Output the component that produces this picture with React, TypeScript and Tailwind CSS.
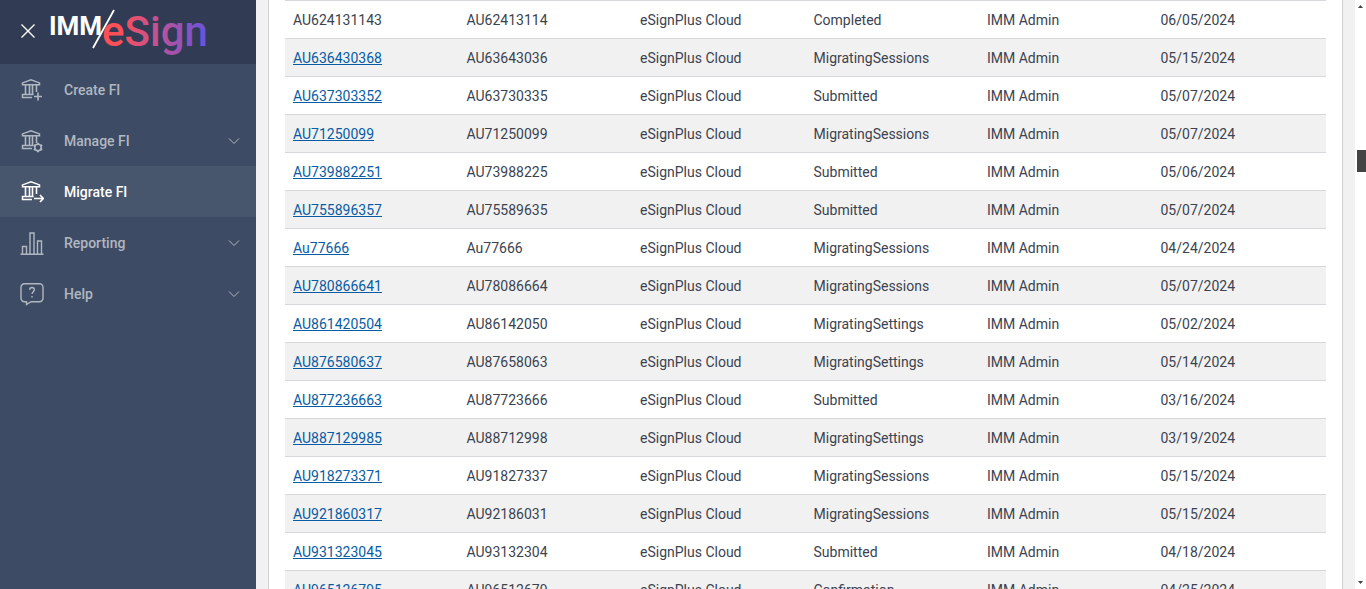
import type { ReactNode } from "react";

interface NavItem {
  label: string;
  icon: ReactNode;
  active?: boolean;
  expandable?: boolean;
}

interface Migration {
  id: string;
  shortId: string;
  status: string;
  date: string;
  locked?: boolean;
}

function Icon({ children }: { children: ReactNode }) {
  return (
    <svg
      viewBox="0 0 24 24"
      className="size-6 shrink-0"
      fill="none"
      stroke="currentColor"
      strokeWidth="1.4"
      aria-hidden="true"
    >
      {children}
    </svg>
  );
}

function Bank() {
  return (
    <>
      <path d="M2.5 6.8V4.9L11 1.7l8.500 3.200v1.900z" strokeWidth="1.5" />
      <path d="M5.500 7v9.500M9.500 7v9.500M12.500 7v9.500M16.500 7v7" strokeWidth="1.6" />
      <path d="M13.500 16.500h-11v3H12" strokeWidth="1.5" />
    </>
  );
}

const navItems: NavItem[] = [
  {
    label: "Create FI",
    icon: (
      <Icon>
        <Bank />
        <path d="M18 14.500v8M14 18.500h8" strokeWidth="1.6" />
      </Icon>
    ),
  },
  {
    label: "Manage FI",
    expandable: true,
    icon: (
      <Icon>
        <Bank />
        <circle cx="18" cy="18.500" r="3.200" strokeWidth="1.600" />
        <path
          d="M18 13.700v1.600M18 21.700v1.600M13.800 16.100l1.400.8M20.800 20.100l1.400.8M13.800 20.900l1.400-.8M20.800 16.900l1.400-.8"
          strokeWidth="2"
        />
      </Icon>
    ),
  },
  {
    label: "Migrate FI",
    active: true,
    icon: (
      <Icon>
        <Bank />
        <path d="M14 18.500h9M20 15l3.300 3.500L20 22" strokeWidth="1.6" />
      </Icon>
    ),
  },
  {
    label: "Reporting",
    expandable: true,
    icon: (
      <Icon>
        <path d="M.5 23.300h23M2.500 23v-7.500h4V23M10 23V2h4v21M17.500 23V10h4v13" />
      </Icon>
    ),
  },
  {
    label: "Help",
    expandable: true,
    icon: (
      <Icon>
        <path d="M4.500 1.700h15a3.500 3.500 0 0 1 3.500 3.500v11a3.500 3.500 0 0 1-3.500 3.500H11L6.500 22.500v-2.800h-2A3.500 3.500 0 0 1 1 16.200v-11a3.500 3.500 0 0 1 3.500-3.500z" />
        <path d="M9.700 7.700c0-3 4.600-3 4.600 0 0 2-2.300 2-2.300 4.300M12 14v1.600" />
      </Icon>
    ),
  },
];

const migrations: Migration[] = [
  { id: "AU624131143", shortId: "AU62413114", status: "Completed", date: "06/05/2024", locked: true },
  { id: "AU636430368", shortId: "AU63643036", status: "MigratingSessions", date: "05/15/2024" },
  { id: "AU637303352", shortId: "AU63730335", status: "Submitted", date: "05/07/2024" },
  { id: "AU71250099", shortId: "AU71250099", status: "MigratingSessions", date: "05/07/2024" },
  { id: "AU739882251", shortId: "AU73988225", status: "Submitted", date: "05/06/2024" },
  { id: "AU755896357", shortId: "AU75589635", status: "Submitted", date: "05/07/2024" },
  { id: "Au77666", shortId: "Au77666", status: "MigratingSessions", date: "04/24/2024" },
  { id: "AU780866641", shortId: "AU78086664", status: "MigratingSessions", date: "05/07/2024" },
  { id: "AU861420504", shortId: "AU86142050", status: "MigratingSettings", date: "05/02/2024" },
  { id: "AU876580637", shortId: "AU87658063", status: "MigratingSettings", date: "05/14/2024" },
  { id: "AU877236663", shortId: "AU87723666", status: "Submitted", date: "03/16/2024" },
  { id: "AU887129985", shortId: "AU88712998", status: "MigratingSettings", date: "03/19/2024" },
  { id: "AU918273371", shortId: "AU91827337", status: "MigratingSessions", date: "05/15/2024" },
  { id: "AU921860317", shortId: "AU92186031", status: "MigratingSessions", date: "05/15/2024" },
  { id: "AU931323045", shortId: "AU93132304", status: "Submitted", date: "04/18/2024" },
  { id: "AU965126795", shortId: "AU96512679", status: "Confirmation", date: "04/25/2024" },
];

function Logo() {
  return (
    <svg viewBox="0 0 176 64" className="h-16 w-44" role="img" aria-label="IMM/eSign">
      <defs>
        <linearGradient id="brand" gradientUnits="userSpaceOnUse" x1="56" y1="0" x2="158" y2="0">
          <stop offset="0" stopColor="#ff4f58" />
          <stop offset="0.150" stopColor="#fb5058" />
          <stop offset="0.600" stopColor="#b552a0" />
          <stop offset="1" stopColor="#6554dc" />
        </linearGradient>
      </defs>
      <text x="1" y="35" fontSize="26" className="fill-white font-bold">
        IMM
      </text>
      <path d="M66 10 45 48" stroke="#fff" strokeWidth="1.800" />
      <text x="54" y="46" fontSize="42" fill="url(#brand)" className="font-medium">
        eSign
      </text>
    </svg>
  );
}

function Sidebar() {
  return (
    <aside className="flex w-64 shrink-0 flex-col bg-[#3d4c64]">
      {/* Brand */}
      <div className="flex h-16 items-center gap-3 bg-[#313c54] pl-5">
        <button type="button" aria-label="Close menu" className="text-white">
          <svg viewBox="0 0 16 16" className="size-4" stroke="currentColor" strokeWidth="1.400">
            <path d="M1.500 .500l13 13M14.500 .500l-13 13" />
          </svg>
        </button>
        <Logo />
      </div>

      {/* Navigation */}
      <nav>
        {navItems.map((item) => (
          <a
            key={item.label}
            href="#"
            className={
              item.active
                ? "flex h-[51px] items-center gap-5 bg-[#48566d] pr-4 pl-5 text-sm font-medium text-white"
                : "flex h-[51px] items-center gap-5 pr-4 pl-5 text-sm font-medium text-[#b1b7c1]"
            }
          >
            {item.icon}
            <span className="grow">{item.label}</span>
            {item.expandable && (
              <svg viewBox="0 0 12 8" className="h-2 w-3" fill="none" stroke="currentColor">
                <path d="M1 1.500l5 5 5-5" />
              </svg>
            )}
          </a>
        ))}
      </nav>
    </aside>
  );
}

function MigrationTable() {
  return (
    <table className="w-full table-fixed border-separate border-spacing-0 text-left text-sm text-[#3b4350]">
      <tbody>
        {migrations.map((row) => (
          <tr key={row.id} className="even:bg-[#f1f1f1] *:h-[38px] *:border-t *:border-[#d6d8de] *:px-2">
            <td>
              {row.locked ? (
                row.id
              ) : (
                <a href="#" className="text-[#075ca6] underline">
                  {row.id}
                </a>
              )}
            </td>
            <td>{row.shortId}</td>
            <td>eSignPlus Cloud</td>
            <td>{row.status}</td>
            <td>IMM Admin</td>
            <td>{row.date}</td>
          </tr>
        ))}
      </tbody>
    </table>
  );
}

function ScrollTrack() {
  return (
    <div className="flex w-[11px] shrink-0 flex-col bg-white pl-0.5" aria-hidden="true">
      <svg viewBox="0 0 9 9" className="h-[9px] w-full fill-[#444]">
        <path d="M1 8l2.500-3L6 8z" />
      </svg>
      <div className="basis-[24%]" />
      <div className="h-[22px] bg-[#444]" />
      <div className="grow" />
      <svg viewBox="0 0 9 9" className="h-[9px] w-full fill-[#444]">
        <path d="M1 1l2.500 3L6 1z" />
      </svg>
    </div>
  );
}

export default function App() {
  return (
    <div className="flex h-screen overflow-hidden bg-[#f1f1f1] font-[Roboto,sans-serif]">
      <Sidebar />
      <main className="mx-3 min-w-0 grow overflow-hidden border-x border-[#cfd1d7] bg-white px-4">
        <MigrationTable />
      </main>
      <ScrollTrack />
    </div>
  );
}
